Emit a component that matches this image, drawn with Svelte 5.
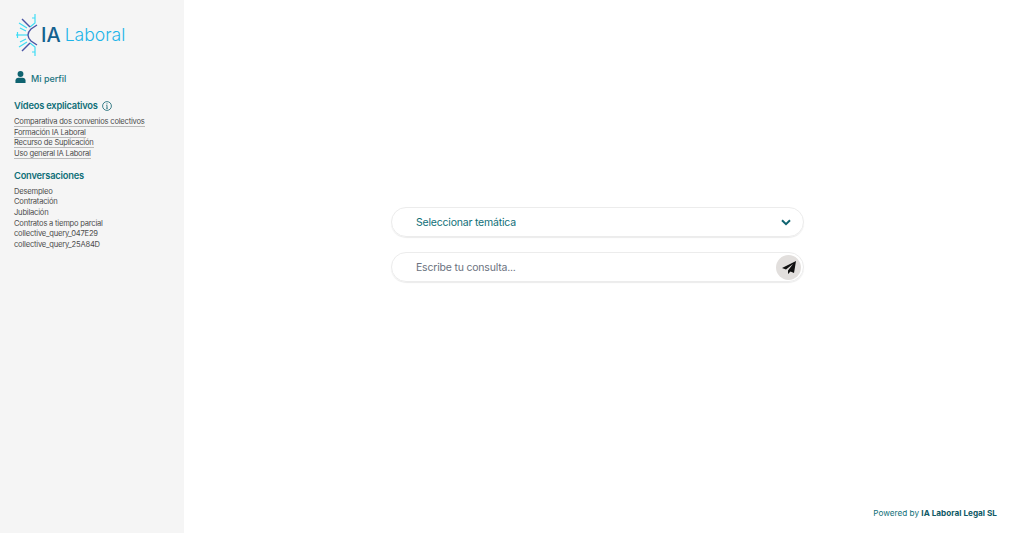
<script lang="ts">
	const videos = [
		'Comparativa dos convenios colectivos',
		'Formación IA Laboral',
		'Recurso de Suplicación',
		'Uso general IA Laboral'
	];
	const chats = [
		'Desempleo',
		'Contratación',
		'Jubilación',
		'Contratos a tiempo parcial',
		'collective_query_047E29',
		'collective_query_25A84D'
	];
</script>

<div class="page">
	<aside class="sidebar">
		<div class="logo">
			<svg width="26" height="42" viewBox="0 0 26 42" fill="none">
				<g stroke="#3fdcf5" stroke-width="1.2">
					<path d="M0 21H12" />
					<path d="M1.5 18v6" />
					<path d="M19 0v9l-5 4" />
					<path d="M19 42v-9l-5-4" />
					<path d="M16 4h3M16 38h3" />
					<path d="M3 9l8 5M3 33l8-5" />
					<path d="M4 14l6 3M4 28l6-3" />
				</g>
				<g stroke="#4a55a5" stroke-width="1.4">
					<path d="M6 5l8 8" />
					<path d="M6 37l8-8" />
					<path d="M21 11l-6 4c-2 2-3 4-3 6s1 4 3 6l6 4" />
				</g>
			</svg>
			<span class="ia">IA</span>
			<span class="laboral">Laboral</span>
		</div>

		<a class="profile" href="#perfil">
			<svg width="11" height="12" viewBox="0 0 12 13" fill="#0f6370">
				<circle cx="6" cy="3.2" r="3.2" />
				<path d="M0.5 13v-2.6C0.5 8.5 2 7.2 3.6 7.2h4.8c1.6 0 3.1 1.3 3.1 3.2V13z" />
			</svg>
			<span>Mi perfil</span>
		</a>

		<div class="heading videos-heading">
			<span>Vídeos explicativos</span>
			<svg width="10" height="10" viewBox="0 0 10 10" fill="none" stroke="#0f6370" stroke-width="0.8">
				<circle cx="5" cy="5" r="4.4" />
				<path d="M5 4.3v3M4.2 7.3h1.6M4.3 4.3H5" />
				<path d="M5 2.3v1" />
			</svg>
		</div>
		<ul class="list links">
			{#each videos as v}
				<li><a href="#video">{v}</a></li>
			{/each}
		</ul>

		<div class="heading chats-heading">Conversaciones</div>
		<ul class="list">
			{#each chats as c}
				<li>{c}</li>
			{/each}
		</ul>
	</aside>

	<main class="main">
		<div class="center">
			<div class="pill select">
				<span>Seleccionar temática</span>
				<svg width="10" height="7" viewBox="0 0 10 7" fill="none" stroke="#0f6370" stroke-width="2">
					<path d="M1 1.2l4 4 4-4" />
				</svg>
			</div>
			<div class="pill query">
				<span>Escribe tu consulta...</span>
				<button class="send" aria-label="Enviar">
					<svg width="14" height="13" viewBox="0 0 14 13" fill="#111">
						<path d="M14 0L0 7l4 1.6 7-5.6-5 6.6V13l2.5-2.6 3.5 1.6z" />
					</svg>
				</button>
			</div>
		</div>
		<div class="powered">Powered by <strong>IA Laboral Legal SL</strong></div>
	</main>
</div>

<style>
	:global(body) {
		margin: 0;
		font-family: Inter, 'Open Sans', sans-serif;
		background: #fff;
	}

	.page {
		display: flex;
		height: 533px;
		overflow: hidden;
	}

	.sidebar {
		width: 184px;
		flex: none;
		box-sizing: border-box;
		background: #f5f5f5;
		padding: 14px 0 0 14px;
	}

	.logo {
		display: flex;
		align-items: center;
		height: 42px;
		padding-left: 2px;
		line-height: 1;
	}

	.ia {
		font-size: 20px;
		font-weight: 500;
		color: #14618f;
		margin-left: -1px;
	}

	.laboral {
		font-size: 17.6px;
		font-weight: 300;
		color: #1db4e8;
		margin-left: 4px;
	}

	.profile {
		display: flex;
		align-items: center;
		gap: 5px;
		margin-top: 17px;
		padding-left: 1px;
		font-size: 9px;
		font-weight: 500;
		color: #1a7480;
		text-decoration: none;
	}

	.profile svg {
		margin-top: -4px;
	}

	.heading {
		font-size: 9.3px;
		font-weight: 600;
		letter-spacing: -0.2px;
		color: #0f6f78;
		line-height: 12px;
	}

	.videos-heading {
		display: flex;
		align-items: center;
		gap: 4px;
		margin-top: 16px;
	}

	.chats-heading {
		margin-top: 10px;
	}

	.list {
		list-style: none;
		margin: 5px 0 0;
		padding: 0;
		font-size: 7.6px;
		letter-spacing: -0.22px;
		line-height: 10.67px;
		color: #4d4d4d;
	}

	.links a {
		color: #4d4d4d;
		text-decoration: none;
		border-bottom: 1px solid #bbb;
	}

	.main {
		flex: 1;
		position: relative;
		display: flex;
		justify-content: center;
		padding: 207px 13px 0 0;
	}

	.center {
		width: 413px;
		display: flex;
		flex-direction: column;
		gap: 15px;
	}

	.pill {
		height: 30px;
		box-sizing: border-box;
		border: 1px solid #ececec;
		border-radius: 15px;
		box-shadow: 0 1px 1px rgba(0, 0, 0, 0.08);
		display: flex;
		align-items: center;
		justify-content: space-between;
		padding: 0 12px 0 24px;
		font-size: 10.5px;
		letter-spacing: -0.2px;
	}

	.select {
		color: #0f6f78;
		font-weight: 400;
	}

	.query {
		color: #6b7280;
		padding-right: 2px;
	}

	.send {
		width: 25px;
		height: 25px;
		border: none;
		border-radius: 50%;
		background: #e2dfdd;
		padding: 0;
		display: flex;
		align-items: center;
		justify-content: center;
	}

	.powered {
		position: absolute;
		right: 27px;
		bottom: 15px;
		font-size: 8.2px;
		color: #0f6f78;
	}

	.powered strong {
		color: #0f5a66;
		font-weight: 700;
	}
</style>
